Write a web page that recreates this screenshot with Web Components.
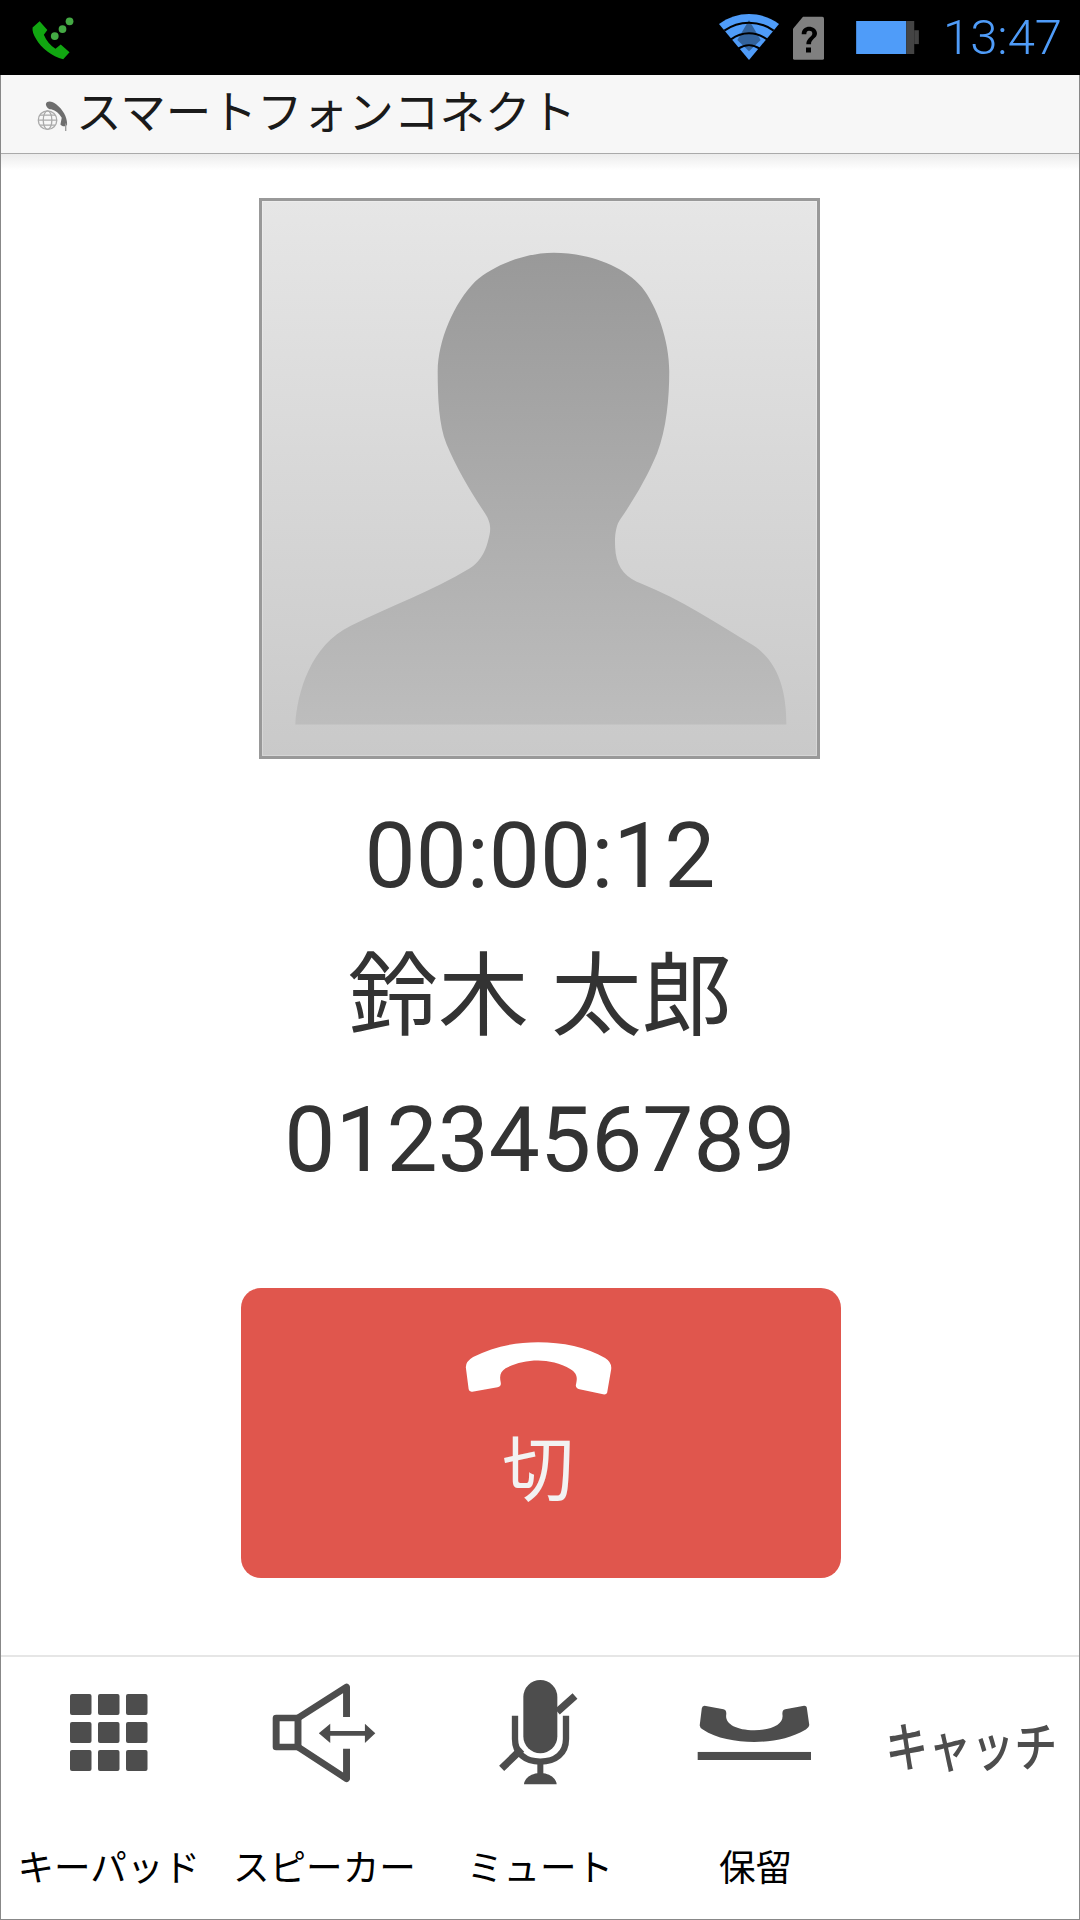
<!DOCTYPE html>
<html lang="ja">
<head>
<meta charset="utf-8">
<title>スマートフォンコネクト</title>
<style>
    html, body{
        margin: 0;
        background: #fff;
    }
    body{
        font-family: Roboto, "Noto Sans CJK JP", sans-serif;
    }
</style>
</head>
<body>
<call-screen>
    <status-bar slot="status" time="13:47"></status-bar>
    <app-bar slot="appbar">スマートフォンコネクト</app-bar>
    <contact-photo></contact-photo>
    <call-info timer="00:00:12" name="鈴木 太郎" number="0123456789"></call-info>
    <end-button>切</end-button>
    <action-bar slot="actions">
        <action-item label="キーパッド">
            <svg width="78" height="78" viewBox="0 0 78 78" fill="#4d4d4d">
                <rect x="0" y="0" width="21.5" height="21" rx="2"/><rect x="28" y="0" width="21.5" height="21" rx="2"/><rect x="56" y="0" width="21.5" height="21" rx="2"/>
                <rect x="0" y="28" width="21.5" height="21" rx="2"/><rect x="28" y="28" width="21.5" height="21" rx="2"/><rect x="56" y="28" width="21.5" height="21" rx="2"/>
                <rect x="0" y="56" width="21.5" height="21" rx="2"/><rect x="28" y="56" width="21.5" height="21" rx="2"/><rect x="56" y="56" width="21.5" height="21" rx="2"/>
            </svg>
        </action-item>
        <action-item label="スピーカー">
            <svg width="104" height="100" viewBox="790 128 300 300" preserveAspectRatio="none">
                <g fill="none" stroke="#4d4d4d" stroke-width="20" stroke-linejoin="round">
                    <rect x="802" y="233" width="63" height="87"/>
                    <path d="M865 233L1005 140V230M865 320L1005 415V325"/>
                </g>
                <path d="M945 272H1070V286H945Z" fill="#4d4d4d"/>
                <path d="M925 279L958 250V308ZM1088 279L1058 250V308Z" fill="#4d4d4d"/>
            </svg>
        </action-item>
        <action-item label="ミュート">
            <svg width="120" height="120" viewBox="0 24 360 360">
                <rect x="130" y="45" width="102" height="220" rx="51" fill="#4d4d4d"/>
                <path d="M105 152V222C105 265 135 290 181 290C227 290 258 265 258 222V152" fill="none" stroke="#4d4d4d" stroke-width="19"/>
                <path d="M65 310L125 252M232 140L285 93" fill="none" stroke="#4d4d4d" stroke-width="22"/>
                <path d="M172 290H190V325C215 328 230 345 230 358H132C132 345 147 328 172 325Z" fill="#4d4d4d"/>
            </svg>
        </action-item>
        <action-item label="保留">
            <svg style="margin-right:3px" width="114" height="55" viewBox="458 195 332 164" preserveAspectRatio="none" fill="#4d4d4d">
                <path d="M480 197L535 208Q545 210 543 225C540 250 570 270 625 270C680 270 710 250 707 225Q705 210 715 208L770 197Q778 197 778 205L785 255Q785 262 775 268C730 295 680 305 625 305C570 305 515 295 475 268Q465 262 466 255L472 205Q473 197 480 197Z"/>
                <rect x="460" y="335" width="330" height="24"/>
            </svg>
        </action-item>
        <action-item text-icon label="">キャッチ</action-item>
    </action-bar>
</call-screen>

<script>
class CallScreen extends HTMLElement{
    constructor(){
        super()
        this.attachShadow({mode: 'open'})
        this.shadowRoot.innerHTML = `
            <style>
                :host{
                    display: flex;
                    flex-direction: column;
                    width: 1080px;
                    height: 1920px;
                    overflow: hidden;
                    background: #fff;
                }
                #body{
                    flex: 1;
                    display: flex;
                    flex-direction: column;
                    align-items: center;
                    border: 1px solid #888;
                    border-top: none;
                    min-height: 0;
                }
                #main{
                    flex: 1;
                    width: 100%;
                    display: flex;
                    flex-direction: column;
                    align-items: center;
                    padding-top: 44px;
                    box-sizing: border-box;
                    background: linear-gradient(#ececec, #fff 16px);
                }
            </style>
            <slot name="status"></slot>
            <div id="body">
                <slot name="appbar"></slot>
                <div id="main"><slot></slot></div>
                <slot name="actions"></slot>
            </div>
        `
    }
}

class StatusBar extends HTMLElement{
    constructor(){
        super()
        this.attachShadow({mode: 'open'})
        this.shadowRoot.innerHTML = `
            <style>
                :host{
                    display: flex;
                    align-items: center;
                    height: 75px;
                    background: #000;
                    padding: 0 18px 0 30px;
                    box-sizing: border-box;
                }
                svg{
                    display: block;
                }
                #call{
                    margin-right: auto;
                    margin-top: 1px;
                }
                #wifi{
                    margin-top: -1px;
                }
                #sim{
                    margin-left: 14px;
                }
                #battery{
                    margin-left: 32px;
                    margin-top: -1px;
                }
                #time{
                    margin-left: 24px;
                    font: 300 49px Roboto, sans-serif;
                    color: #4f9cf9;
                    line-height: 75px;
                }
            </style>
            <svg id="call" width="46" height="44" viewBox="18 25 130 125">
                <path d="M45 40L25 58Q23 72 35 90C50 117 80 139 112 148L130 128L105 106L90 118C75 108 64 95 57 78L67 65Z" fill="#11a611"/>
                <circle cx="130" cy="40" r="11" fill="#44a944"/>
                <circle cx="110" cy="62" r="11" fill="#44a944"/>
                <circle cx="88" cy="82" r="11" fill="#44a944"/>
            </svg>
            <svg id="wifi" width="60" height="46" viewBox="0 0 180 138">
                <path d="M0 30C55 -10 125 -10 180 30L90 138Z" fill="#4f9cf9"/>
                <path d="M90 18L125 78L90 112L55 78Z" fill="#33639c"/>
                <g fill="none" stroke="#000" stroke-width="6">
                    <path d="M16 50C60 18 120 18 164 50"/>
                    <path d="M36 76C70 52 110 52 144 76"/>
                    <path d="M58 104C78 90 102 90 122 104"/>
                </g>
            </svg>
            <svg id="sim" width="31" height="44" viewBox="0 0 93 131">
                <path d="M30 2H88Q93 2 93 7V126Q93 131 88 131H5Q0 131 0 126V38Z" fill="#808080"/>
                <path d="M26 54C26 38 38 32 48 32C60 32 72 40 72 52C72 66 54 68 54 84H40C40 66 58 62 58 52C58 46 54 44 48 44C42 44 40 48 40 54Z" fill="#000"/>
                <rect x="39" y="94" width="15" height="15" fill="#000"/>
            </svg>
            <svg id="battery" width="63" height="33" viewBox="0 0 190 100">
                <rect x="0" y="0" width="152" height="100" fill="#4f9cf9"/>
                <rect x="152" y="0" width="24" height="100" fill="#444"/>
                <rect x="176" y="28" width="14" height="42" fill="#444"/>
            </svg>
            <span id="time"></span>
        `
        this._timeEl = this.shadowRoot.querySelector('#time')
    }
    connectedCallback(){
        this._timeEl.textContent = this.getAttribute('time')
    }
}

class AppBar extends HTMLElement{
    constructor(){
        super()
        this.attachShadow({mode: 'open'})
        this.shadowRoot.innerHTML = `
            <style>
                :host{
                    display: flex;
                    align-items: center;
                    width: 100%;
                    height: 79px;
                    flex: none;
                    padding: 0 0 10px 35px;
                    box-sizing: border-box;
                    background: #f7f7f7;
                    border-bottom: 1px solid #aaa;
                    font: 400 45.6px "Noto Sans CJK JP", sans-serif;
                    color: #1a1a1a;
                }
                svg{
                    display: block;
                    margin-right: 7px;
                    margin-top: 14px;
                }
            </style>
            <svg width="33" height="32" viewBox="30 265 100 95">
                <g fill="none" stroke="#aaa" stroke-width="4">
                    <circle cx="65" cy="325" r="28"/>
                    <ellipse cx="65" cy="325" rx="13" ry="28"/>
                    <path d="M37 325H93M42 310H88M42 340H88"/>
                </g>
                <path d="M60 276C64 264 80 268 92 278C112 294 126 318 124 340C118 346 108 344 104 338L108 318C100 304 90 296 76 292C68 294 60 284 60 276Z" fill="#6e6e6e"/>
                <path d="M120 335V358" stroke="#999" stroke-width="4"/>
            </svg>
            <slot></slot>
        `
    }
}

class ContactPhoto extends HTMLElement{
    constructor(){
        super()
        this.attachShadow({mode: 'open'})
        this.shadowRoot.innerHTML = `
            <style>
                :host{
                    display: block;
                    width: 561px;
                    height: 561px;
                    flex: none;
                    margin-right: 2px;
                    box-sizing: border-box;
                    border: 3px solid #999;
                    background: linear-gradient(#e6e6e6, #c9c9c9);
                    box-shadow: inset 0 0 0 1px rgba(255, 255, 255, .25);
                }
                svg{
                    display: block;
                    width: 100%;
                    height: 100%;
                }
            </style>
            <svg viewBox="58 55 1450 1450">
                <defs>
                    <linearGradient id="sil" gradientUnits="userSpaceOnUse" x1="0" y1="190" x2="0" y2="1423">
                        <stop offset="0" stop-color="#999"/>
                        <stop offset="1" stop-color="#bdbdbd"/>
                    </linearGradient>
                </defs>
                <path fill="url(#sil)" d="M145 1423C150 1340 185 1215 290 1165C400 1110 500 1075 600 1015C625 1000 640 975 648 945C655 920 660 900 640 870C600 810 565 750 540 690C520 640 517 570 517 500C517 420 560 320 615 265C665 220 750 190 820 190C900 190 1000 220 1050 280C1090 330 1122 420 1122 500C1122 570 1115 650 1090 715C1065 775 1030 835 995 885C980 905 978 940 982 975C988 1015 1010 1040 1050 1055C1150 1095 1250 1160 1340 1215C1410 1260 1428 1340 1428 1423Z"/>
            </svg>
        `
    }
}

class CallInfo extends HTMLElement{
    constructor(){
        super()
        this.attachShadow({mode: 'open'})
        this.shadowRoot.innerHTML = `
            <style>
                :host{
                    display: flex;
                    flex-direction: column;
                    align-items: center;
                    margin-top: 27px;
                    color: #333;
                    font-family: Roboto, "Noto Sans CJK JP", sans-serif;
                    font-size: 91px;
                }
                div{
                    height: 141px;
                    line-height: 141px;
                    white-space: nowrap;
                }
                #name{
                    font-size: 90.5px;
                }
                #number{
                    margin-top: 2px;
                }
            </style>
            <div id="timer"></div>
            <div id="name"></div>
            <div id="number"></div>
        `
    }
    connectedCallback(){
        for(const key of ['timer', 'name', 'number']){
            this.shadowRoot.querySelector('#' + key).textContent = this.getAttribute(key)
        }
    }
}

class EndButton extends HTMLElement{
    constructor(){
        super()
        this.attachShadow({mode: 'open'})
        this.shadowRoot.innerHTML = `
            <style>
                :host{
                    display: flex;
                    flex-direction: column;
                    align-items: center;
                    width: 600px;
                    height: 290px;
                    flex: none;
                    margin: 77px 0 0 2px;
                    padding: 54px 6px 0 0;
                    box-sizing: border-box;
                    background: #e0564d;
                    border-radius: 20px;
                    color: #f2f2f2;
                    font: 400 72px "Noto Sans CJK JP", sans-serif;
                }
                svg{
                    display: block;
                }
                #label{
                    line-height: 80px;
                    margin-top: 29px;
                }
            </style>
            <svg width="147" height="53" viewBox="600 217 362 158" preserveAspectRatio="none">
                <path fill="#fff" d="M620 262C670 230 725 218 780 218C840 218 900 232 945 265Q962 278 960 298L950 368Q948 375 940 373L882 358Q872 355 873 345C878 320 875 310 860 298C835 280 805 272 780 272C750 272 725 280 700 295C688 305 684 315 688 338Q690 350 680 352L618 365Q610 366 609 358L602 292Q602 275 620 262Z"/>
            </svg>
            <div id="label"><slot></slot></div>
        `
    }
}

class ActionBar extends HTMLElement{
    constructor(){
        super()
        this.attachShadow({mode: 'open'})
        this.shadowRoot.innerHTML = `
            <style>
                :host{
                    display: grid;
                    grid-template-columns: repeat(5, 1fr);
                    width: 100%;
                    height: 264px;
                    flex: none;
                    box-sizing: border-box;
                    border-top: 2px solid #e6e6e6;
                }
            </style>
            <slot></slot>
        `
    }
}

class ActionItem extends HTMLElement{
    constructor(){
        super()
        this.attachShadow({mode: 'open'})
        this.shadowRoot.innerHTML = `
            <style>
                :host{
                    display: flex;
                    flex-direction: column;
                    align-items: center;
                    font-family: "Noto Sans CJK JP", sans-serif;
                }
                #icon{
                    display: flex;
                    align-items: center;
                    justify-content: center;
                    height: 151px;
                    width: 100%;
                }
                :host([text-icon]) #icon{
                    font-size: 43px;
                    font-weight: 500;
                    color: #4d4d4d;
                    padding-top: 16px;
                    box-sizing: border-box;
                    white-space: nowrap;
                    transform: scaleY(1.25);
                }
                #label{
                    margin-top: 33px;
                    font-size: 36.6px;
                    line-height: 50px;
                    color: #000;
                    white-space: nowrap;
                }
            </style>
            <div id="icon"><slot></slot></div>
            <div id="label"></div>
        `
        this._labelEl = this.shadowRoot.querySelector('#label')
    }
    connectedCallback(){
        this._labelEl.textContent = this.getAttribute('label')
    }
}

customElements.define('call-screen', CallScreen)
customElements.define('status-bar', StatusBar)
customElements.define('app-bar', AppBar)
customElements.define('contact-photo', ContactPhoto)
customElements.define('call-info', CallInfo)
customElements.define('end-button', EndButton)
customElements.define('action-bar', ActionBar)
customElements.define('action-item', ActionItem)
</script>
</body>
</html>
